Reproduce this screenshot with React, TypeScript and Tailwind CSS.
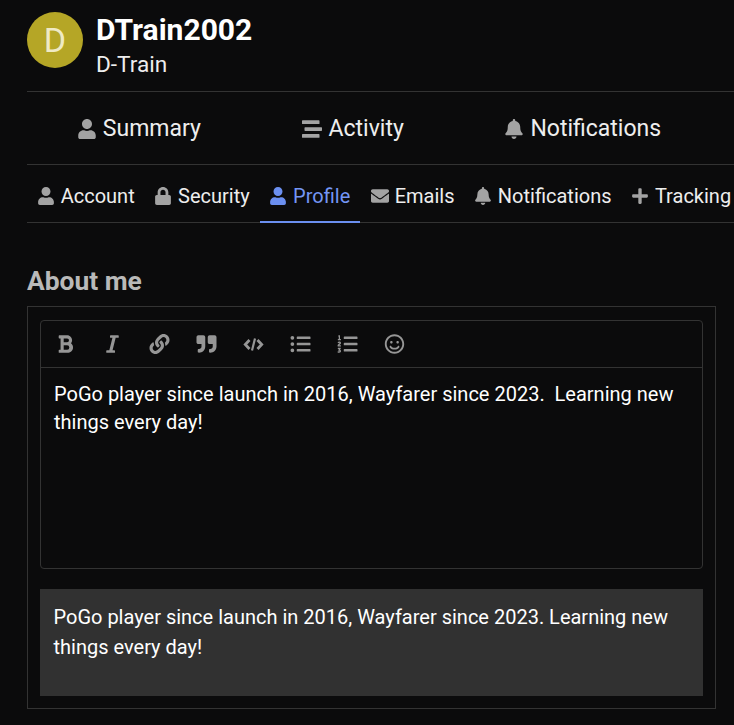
import React from "react";
import { FaUser, FaStream, FaBell, FaLock, FaEnvelope, FaPlus, FaBold, FaItalic, FaLink, FaQuoteRight, FaListUl, FaListOl, FaRegSmile } from "react-icons/fa";

const CodeIcon = ({ className }: { className?: string }) => (
  <svg viewBox="0 0 21 20" className={className} fill="none" stroke="currentColor">
    <path d="M6.5 6 L2.3 10.5 L6.5 15" strokeWidth="2.8" />
    <path d="M14.5 6 L18.7 10.5 L14.5 15" strokeWidth="2.8" />
    <path d="M12 4.5 L9 16.5" strokeWidth="2.2" />
  </svg>
);

const tabs = [
  { icon: FaUser, label: "Account", iconClass: "w-4", gapClass: "gap-[7px]" },
  { icon: FaLock, label: "Security", iconClass: "w-4", gapClass: "gap-[7px]" },
  { icon: FaUser, label: "Profile", active: true, iconClass: "w-4", gapClass: "gap-[7px]" },
  { icon: FaEnvelope, label: "Emails", iconClass: "w-[18px]", gapClass: "gap-[6px]" },
  { icon: FaBell, label: "Notifications", iconClass: "w-4", gapClass: "gap-[7px]" },
  { icon: FaPlus, label: "Tracking", iconClass: "w-4", gapClass: "gap-[7px]" },
];

const tools = [FaBold, FaItalic, FaLink, FaQuoteRight, CodeIcon, FaListUl, FaListOl, FaRegSmile];

export default function App() {
  return (
    <div className="w-[734px] h-[725px] overflow-hidden bg-[#0b0b0c] pl-[27px] text-white font-['Roboto',sans-serif]">
      <div className="h-[92px] flex gap-[13px] pt-3 border-b border-[#333333]">
        <div className="w-14 h-14 rounded-full bg-[#b5a626] flex items-center justify-center text-[34px] text-[#efeac4] leading-none">D</div>
        <div>
          <div className="text-[30px] font-bold leading-[36px]">DTrain2002</div>
          <div className="text-[22.6px] leading-[29px] text-[#eeeeee] mt-[2px]">D-Train</div>
        </div>
      </div>
      <div className="h-[73px] border-b border-[#333333]">
        <div className="w-[685px] h-full pt-[2px] flex items-center justify-around text-[23px] text-[#eeeeee]">
          <span className="flex items-center gap-[7px]"><FaUser className="text-[#a3a3a3] h-5 w-[18px]" />Summary</span>
          <span className="flex items-center gap-[6px]"><FaStream className="text-[#a3a3a3] h-5 w-5" />Activity</span>
          <span className="flex items-center gap-[7px]"><FaBell className="text-[#a3a3a3] h-5 w-[18px]" />Notifications</span>
        </div>
      </div>
      <div className="h-[58px] flex border-b border-[#333333] w-[730px] pl-[0.5px]">
        {tabs.map(({ icon: Icon, label, active, iconClass, gapClass }) => (
          <div
            key={label}
            className={`flex shrink-0 items-center ${gapClass} px-[10.2px] pt-[6px] h-[58px] text-[20px] whitespace-nowrap border-b-2 ${active ? "border-[#6b8ff0] text-[#7496f5]" : "border-transparent text-[#eeeeee]"}`}
          >
            <Icon className={`h-[18px] ${iconClass} ${active ? "text-[#6b8ff0]" : "text-[#a3a3a3]"}`} />
            {label}
          </div>
        ))}
      </div>
      <h2 className="text-[26.4px] font-bold leading-[32px] text-[#b9b9b9] mt-[42px]">About me</h2>
      <div className="w-[689px] h-[403px] mt-[9px] border border-[#333333] px-3 pt-[13px]">
        <div className="h-[249px] rounded border border-[#333333]">
          <div className="h-[47px] flex items-center border-b border-[#333333] pl-[14px] gap-[26px] text-[#969696]">
            {tools.map((Icon, i) => (
              <Icon key={i} className="w-[21px] h-[20px] shrink-0" />
            ))}
          </div>
          <div className="px-[13px] pt-3 text-[20px] leading-[28px] text-white">
            PoGo player since launch in 2016, Wayfarer since 2023.&nbsp; Learning new things every day!
          </div>
        </div>
        <div className="mt-5 h-[107px] bg-[#313131] px-[13.5px] pt-[13px] text-[20px] leading-[30px] text-white">
          PoGo player since launch in 2016, Wayfarer since 2023. Learning new things every day!
        </div>
      </div>
    </div>
  );
}
